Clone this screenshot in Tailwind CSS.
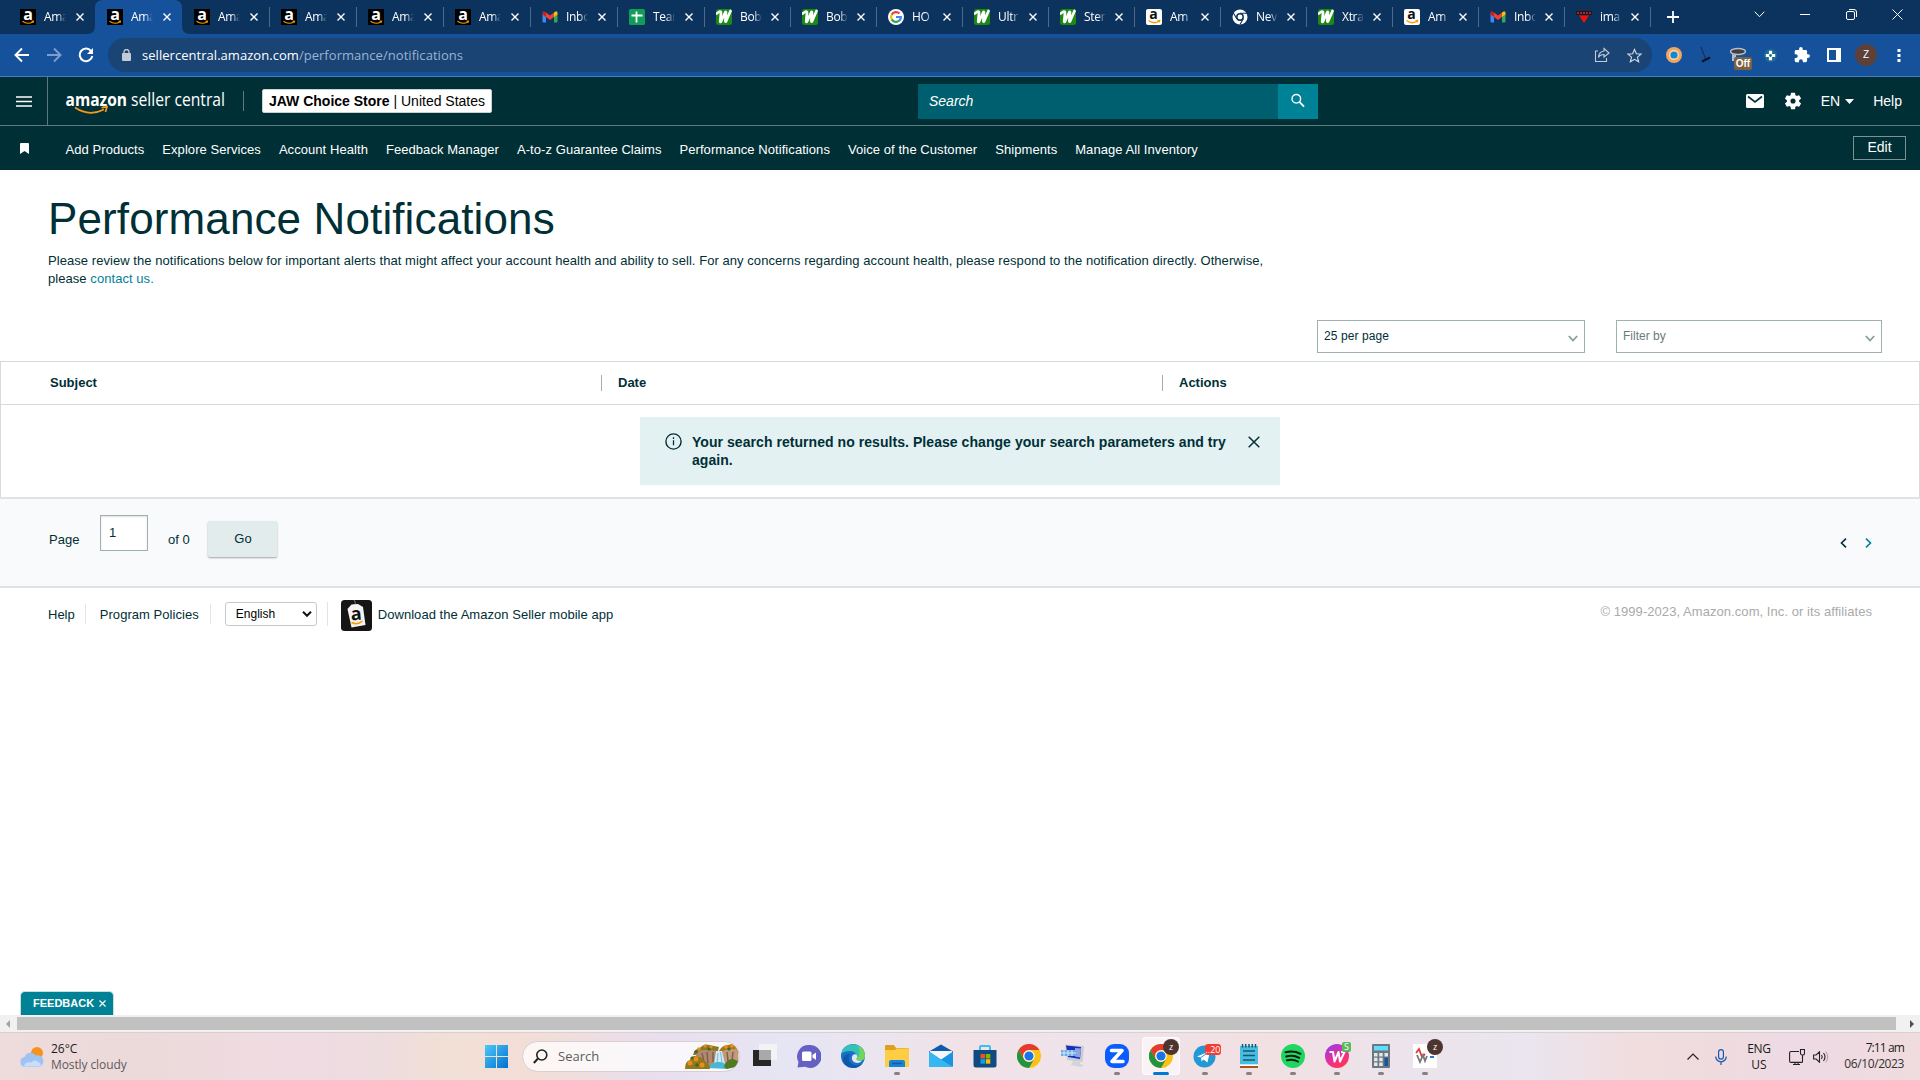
<!DOCTYPE html>
<html lang="en">
  <head>
    <meta charset="UTF-8" />
    <meta name="viewport" content="width=device-width, initial-scale=1.0" />
    <title>Performance Notifications</title>
    <script src="https://cdn.jsdelivr.net/npm/@tailwindcss/browser@4"></script>
  </head>

  <body
    class="w-[1920px] h-[1080px] overflow-hidden flex flex-col bg-white text-[#002f36] font-['Liberation_Sans',Arial,sans-serif]"
  >
    <!-- Shared icons -->
    <svg class="hidden">
      <symbol id="amazon-dark" viewBox="0 0 16 16">
        <rect width="16" height="16" fill="#000" />
        <text x="8" y="10.800" font-family="Open Sans, sans-serif" font-size="16" font-weight="700" fill="#fff" text-anchor="middle">a</text>
        <path d="M2.500 12.300q5 3.600 10.500.6M11.500 12.300l2-.2-.4 1.600" fill="none" stroke="#f90" stroke-width="1.100" />
      </symbol>
      <symbol id="amazon-light" viewBox="0 0 16 16">
        <rect width="16" height="16" rx="2" fill="#fff" />
        <text x="7.500" y="9.800" font-family="Open Sans, sans-serif" font-size="14" font-weight="700" fill="#111" text-anchor="middle">a</text>
        <path d="M2.500 11.500q5 4 10.500.8M11.500 11.600l2.200-.2-.6 2" fill="none" stroke="#f90" stroke-width="1.300" />
      </symbol>
      <symbol id="gmail" viewBox="0 0 16 16">
        <path d="M.5 4v8.500q0 1 1 1H4V7z" fill="#4285f4" />
        <path d="M15.500 4v8.500q0 1-1 1H12V7z" fill="#34a853" />
        <path d="M12 3.500l1.500-1q2-.6 2 1.500v1.500L12 8z" fill="#fbbc04" />
        <path d="M.5 5.500V4q0-2.100 2-1.500L4 3.500V8z" fill="#c5221f" />
        <path d="M4 3.500L8 6.500l4-3V8l-4 3-4-3z" fill="#ea4335" />
      </symbol>
      <symbol id="sheets" viewBox="0 0 16 16">
        <rect width="16" height="16" rx="1.500" fill="#0f9d58" />
        <path d="M7.500 2.500v11M2.500 6.500h11" stroke="#fff" stroke-width="1.800" />
      </symbol>
      <symbol id="green-w" viewBox="0 0 16 16">
        <rect width="16" height="16" rx="2.500" fill="#1c8a10" />
        <path d="M.8 4.500Q5 .8 5 4L4.200 12.500q.2 1 .8 0L9.300 3.200q.7-.8.7.3L9.300 12q.2 1.200.9 0L14.500 2" fill="none" stroke="#fff" stroke-width="2.700" stroke-linejoin="round" stroke-linecap="round" />
      </symbol>
      <symbol id="google" viewBox="0 0 16 16">
        <circle cx="8" cy="8" r="8" fill="#fff" />
        <g fill="none" stroke-width="2.200">
          <path d="M11.500 4.600A4.900 4.900 0 0 0 3.700 5.700" stroke="#ea4335" />
          <path d="M3.700 5.700a4.900 4.900 0 0 0 0 4.700" stroke="#fbbc05" />
          <path d="M3.700 10.400a4.900 4.900 0 0 0 7.500 1.300" stroke="#34a853" />
          <path d="M11.200 11.700A4.900 4.900 0 0 0 12.900 8H8" stroke="#4285f4" />
        </g>
      </symbol>
      <symbol id="chrome-white" viewBox="0 0 16 16">
        <circle cx="8" cy="8" r="7.500" fill="#fff" />
        <path d="M8 4.300h7M4.800 9.800L1.400 4M11.200 9.800L8 15.500" stroke="#0c335e" stroke-width="1.100" />
        <circle cx="8" cy="8" r="3.200" fill="#fff" stroke="#0c335e" stroke-width="1.500" />
      </symbol>
      <symbol id="triangle" viewBox="0 0 16 16">
        <path d="M0 2h16v4H0z" fill="#2a1210" />
        <path d="M1 4h14" stroke="#c0392b" stroke-width="1.500" stroke-dasharray="2 1" />
        <path d="M3 6.500h10L8 14z" fill="#f40f0f" />
      </symbol>
      <symbol id="chrome" viewBox="0 0 24 24">
        <circle cx="12" cy="12" r="12" fill="#fbc116" />
        <path d="M1.600 6A12 12 0 0 1 22.400 6H12a6 6 0 0 0-5.200 9z" fill="#e33b2e" />
        <path d="M1.600 6A12 12 0 0 0 12 24l5.200-9A6 6 0 0 1 6.800 15z" fill="#229342" />
        <circle cx="12" cy="12" r="5.700" fill="#fff" />
        <circle cx="12" cy="12" r="4.600" fill="#1a73e8" />
      </symbol>
    </svg>

    <!-- Tab strip -->
    <div class="h-[34px] bg-[#0c335e] flex items-center pl-[9px] font-['Open_Sans','Noto_Sans',sans-serif] shrink-0">
      <div id="tabs" class="flex h-full"></div>
      <svg class="w-3 h-3 ml-[16px]" viewBox="0 0 12 12"><path d="M6 0v12M0 6h12" stroke="#fff" stroke-width="1.800" /></svg>
      <div class="flex items-center ml-auto mr-[17px] -mt-[6px] gap-[35px]">
        <svg class="w-[11px] h-[7px]" viewBox="0 0 11 7"><path d="M.7.7l4.800 5 4.800-5" fill="none" stroke="#fff" /></svg>
        <svg class="w-[11px] h-[7px]" viewBox="0 0 11 7"><path d="M0 3.500h10" stroke="#fff" /></svg>
        <svg class="w-[11px] h-[11px]" viewBox="0 0 11 11"><rect x=".5" y="2.500" width="8" height="8" rx="1.500" fill="none" stroke="#fff" /><path d="M3 .5h5q2.500 0 2.500 2.500v5" fill="none" stroke="#fff" /></svg>
        <svg class="w-[11px] h-[11px]" viewBox="0 0 11 11"><path d="M.5.5l10 10M10.500.5l-10 10" stroke="#fff" /></svg>
      </div>
    </div>

    <!-- Address bar -->
    <div class="h-[43px] bg-[#15529b] border-b border-[#4b7ab8] flex items-center pl-[14px] shrink-0">
      <svg class="w-4 h-4" viewBox="0 0 16 16"><path d="M15 8H2M8 1.500L1.500 8 8 14.500" fill="none" stroke="#fff" stroke-width="1.900" /></svg>
      <svg class="w-4 h-4 ml-[16px]" viewBox="0 0 16 16"><path d="M1 8h13M8 1.500L14.500 8 8 14.500" fill="none" stroke="#7f9fca" stroke-width="1.900" /></svg>
      <svg class="w-4 h-4 ml-[16px]" viewBox="0 0 16 16"><path d="M13.300 4.300A6.300 6.300 0 1 0 14.300 9" fill="none" stroke="#fff" stroke-width="2" /><path d="M15 1v6H9z" fill="#fff" /></svg>
      <div class="w-[1544px] h-[34px] ml-[14px] rounded-full bg-[#194474] flex items-center pl-[14px] pr-[10px]">
        <svg class="w-[9px] h-3" viewBox="0 0 9 12"><rect y="4" width="9" height="8" rx="1" fill="#c2cbd6" /><path d="M2 5V3a2.500 2.500 0 0 1 5 0v2" fill="none" stroke="#c2cbd6" stroke-width="1.300" /></svg>
        <div class="ml-[11px] text-[13px] leading-none tracking-[0.04px] text-white font-['Open_Sans','Noto_Sans',sans-serif]">sellercentral.amazon.com<span class="text-[#9db3d1]">/performance/notifications</span></div>
        <svg class="w-4 h-4 ml-auto" viewBox="0 0 16 16"><path d="M4 4H1.500v10.500h11V11M10 1.500l5 4.500-5 4V7.500q-4 0-5.500 3 .5-6 5.500-6.500z" fill="none" stroke="#c2cbd6" stroke-width="1.100" /></svg>
        <svg class="w-[15px] h-[15px] ml-[17px]" viewBox="0 0 16 16"><path d="M8 1.500l2 4.600 5 .4-3.800 3.300 1.200 4.900L8 12.100l-4.400 2.600 1.200-4.900L1 6.500l5-.4z" fill="none" stroke="#d4dbe4" stroke-width="1.200" /></svg>
      </div>
      <div class="flex items-center flex-1 ml-[14px]">
        <svg class="w-4 h-4" viewBox="0 0 16 16"><circle cx="8" cy="8" r="8" fill="#f4a55f" /><circle cx="8" cy="8" r="5" fill="#fbd9b5" /><circle cx="8" cy="8" r="3.600" fill="#1388d6" /></svg>
        <svg class="w-4 h-4 ml-[16px]" viewBox="0 0 16 16"><path d="M3 0l5 13" stroke="#17284a" /><path d="M4 14.500l8-4" stroke="#0b1220" stroke-width="2" /></svg>
        <div class="relative ml-[16px] w-4 h-4">
          <svg class="w-4 h-4" viewBox="0 0 16 16"><ellipse cx="8" cy="4.500" rx="7.500" ry="3" fill="#3c4043" stroke="#b9bdc2" stroke-width="1.500" /><path d="M2 7v7h4V8z" fill="#b9bdc2" /></svg>
          <span class="absolute left-[4px] top-[10px] w-[18px] h-[13px] rounded-[2px] bg-[#7a6144] text-white text-[10px] font-bold leading-[13px] text-center">Off</span>
        </div>
        <svg class="w-[15px] h-[15px] ml-[17px]" viewBox="0 0 16 16"><circle cx="8" cy="8" r="7" fill="#1d6a96" /><path d="M6.300 3h3.400v3.300H13v3.400H9.700V13H6.300V9.700H3V6.300h3.300z" fill="#fff" /><circle cx="8" cy="8" r="1.500" fill="#1d6a96" /></svg>
        <svg class="w-4 h-4 ml-[16px]" viewBox="1 1 22 22"><path fill="#fff" d="M20.500 11H19V7a2 2 0 0 0-2-2h-4V3.500a2.500 2.500 0 0 0-5 0V5H4a2 2 0 0 0-2 2v3.800h1.500a2.700 2.700 0 0 1 0 5.400H2V20a2 2 0 0 0 2 2h3.800v-1.500a2.700 2.700 0 0 1 5.400 0V22H17a2 2 0 0 0 2-2v-4h1.500a2.500 2.500 0 0 0 0-5z" /></svg>
        <svg class="w-[14px] h-[14px] ml-[17px]" viewBox="0 0 14 14"><path d="M1 1h12v12H1z" fill="none" stroke="#fff" stroke-width="2" /><path d="M9 1h4v12H9z" fill="#fff" /></svg>
        <span class="ml-[14px] w-[22px] h-[22px] rounded-full bg-[#5d4037] text-white text-[10px] leading-[22px] text-center">Z</span>
        <svg class="w-1 h-4 ml-[20px]" viewBox="0 0 4 16"><path d="M.5 2h3v3h-3zM.5 7h3v3h-3zM.5 12h3v3h-3z" fill="#fff" /></svg>
      </div>
    </div>

    <!-- Seller Central header -->
    <header class="h-[49px] bg-[#002f36] border-b border-[#5f7a7c] flex items-center text-white text-sm leading-none shrink-0">
      <div class="w-12 h-full border-r border-[#5f7a7c] flex items-center pl-4">
        <svg class="w-4 h-[11px]" viewBox="0 0 16 11"><path d="M0 1h16M0 5.500h16M0 10h16" stroke="#fff" stroke-width="1.600" /></svg>
      </div>
      <svg class="w-[164px] h-8 ml-[16px]" viewBox="0 0 164 32" font-family="Open Sans, sans-serif" fill="#fff">
        <text x="1.500" y="20.500" font-size="18.500" font-weight="700" textLength="61.500" lengthAdjust="spacingAndGlyphs">amazon</text>
        <text x="67" y="20.500" font-size="18.500" textLength="94" lengthAdjust="spacingAndGlyphs">seller central</text>
        <path d="M11 22.500q14 9.500 29 2M37.500 22.700l5.500-.8-1.500 5" fill="none" stroke="#f7981d" stroke-width="1.700" />
      </svg>
      <div class="w-px h-5 bg-[#5f7a7c] ml-[15px]"></div>
      <div class="ml-[18px] w-[230px] h-6 rounded-[2px] border border-[#c8d0d0] bg-white text-black leading-[23px] text-center whitespace-nowrap"><b>JAW Choice Store</b> | United States</div>
      <div class="ml-[426px] w-[360px] h-[35px] bg-[#005f6e] rounded-l-[1px] pl-[11px] leading-[35px] italic">Search</div>
      <div class="w-[40px] h-[35px] bg-[#008296] flex items-center justify-center">
        <svg class="w-[14px] h-[15px] mr-px mb-px" viewBox="0 0 15 15"><circle cx="5.700" cy="5.700" r="4.600" fill="none" stroke="#fff" stroke-width="1.500" /><path d="M9 9l5 5" stroke="#fff" stroke-width="2" /></svg>
      </div>
      <div class="flex items-center ml-auto mr-[18px]">
        <svg class="w-[18px] h-[14px]" viewBox="0 0 18 14"><rect width="18" height="14" rx="1.500" fill="#fff" /><path d="M2 2.500l7 5.500 7-5.500" fill="none" stroke="#002f36" stroke-width="1.600" /></svg>
        <svg class="w-[18px] h-[18px] ml-[20px]" viewBox="1.500 1.500 21 21"><path fill="#fff" d="M19.140 12.940c.04-.3.060-.61.060-.94s-.02-.64-.07-.94l2.030-1.580a.49.49 0 0 0 .12-.61l-1.920-3.320a.49.49 0 0 0-.59-.22l-2.390.96a7 7 0 0 0-1.620-.94l-.36-2.540a.48.48 0 0 0-.48-.41h-3.840a.48.48 0 0 0-.47.41l-.36 2.540a7 7 0 0 0-1.620.94l-2.390-.96a.48.48 0 0 0-.59.22L2.740 8.870a.48.48 0 0 0 .12.61l2.030 1.580a7 7 0 0 0 0 1.880l-2.030 1.580a.49.49 0 0 0-.12.61l1.920 3.320c.12.220.37.290.59.220l2.390-.96c.5.380 1.030.7 1.620.94l.36 2.540c.05.240.24.410.48.410h3.840c.24 0 .44-.17.47-.41l.36-2.540a7 7 0 0 0 1.620-.94l2.390.96c.22.080.47 0 .59-.22l1.920-3.320a.48.48 0 0 0-.12-.61zM12 15a3 3 0 1 1 0-6 3 3 0 0 1 0 6z" /></svg>
        <span class="ml-[19px]">EN</span>
        <svg class="w-[9px] h-[5px] ml-[5px]" viewBox="0 0 9 5"><path d="M0 0h9L4.500 5z" fill="#fff" /></svg>
        <span class="ml-[19px]">Help</span>
      </div>
    </header>

    <!-- Favorites bar -->
    <nav class="h-[44px] bg-[#002f36] flex items-center text-white text-[13px] leading-none shrink-0">
      <svg class="w-[9px] h-[11px] ml-[20px] mr-[36.500px]" viewBox="0 0 9 11"><path d="M0 1q0-1 1-1h7q1 0 1 1v10L4.500 8 0 11z" fill="#fff" /></svg>
      <div id="favorites" class="flex gap-[18px] tracking-[0.064px] mt-[2px]"></div>
      <div class="ml-auto mr-[14px] w-[53px] h-6 border border-[#7b9193] text-sm leading-[21px] text-center">Edit</div>
    </nav>

    <!-- Page content -->
    <main class="flex-1 flex flex-col relative">
      <div class="h-[191px] pl-12">
        <h1 class="pt-[24px] text-[44px] leading-[50px] tracking-[0.12px] whitespace-nowrap">Performance Notifications</h1>
        <p class="mt-[8px] w-[1240px] text-[13px] leading-[18px] tracking-[0.058px]">
          Please review the notifications below for important alerts that might affect your account health and ability to sell. For any concerns regarding account health, please respond to the notification directly. Otherwise,<br />please <a class="text-[#008296]">contact us.</a>
        </p>
        <div class="flex gap-[31px] ml-[1269px] mt-[32px] text-xs leading-none">
          <div class="w-[268px] h-[33px] border border-[#9fb0b0] flex items-center justify-between pl-[6px] pr-[6px] shrink-0">
            <span class="-mt-px tracking-[0.08px]">25 per page</span>
            <svg class="w-[10px] h-[7px] mt-[3px]" viewBox="0 0 10 7"><path d="M.8 1L5 5.500 9.200 1" fill="none" stroke="#8b9c9d" stroke-width="1.800" /></svg>
          </div>
          <div class="w-[266px] h-[33px] border border-[#9fb0b0] flex items-center justify-between pl-[6px] pr-[6px] shrink-0">
            <span class="-mt-px text-[#6b7b7c]">Filter by</span>
            <svg class="w-[10px] h-[7px] mt-[3px]" viewBox="0 0 10 7"><path d="M.8 1L5 5.500 9.200 1" fill="none" stroke="#8b9c9d" stroke-width="1.800" /></svg>
          </div>
        </div>
      </div>

      <section class="h-[136px] border border-b-0 border-[#d5dbdb]">
        <div class="h-[43px] border-b border-[#d5dbdb] flex items-center text-[13px] font-bold leading-none">
          <span class="w-[551px] ml-[49px] pb-px">Subject</span>
          <span class="w-[561px] h-4 border-l border-[#9fb0b0] pl-[16px] leading-4">Date</span>
          <span class="h-4 border-l border-[#9fb0b0] pl-[16px] leading-4">Actions</span>
        </div>
        <div class="w-[640px] h-[68px] mt-3 mx-auto bg-[#e3f1f2] flex">
          <svg class="w-[17px] h-[17px] ml-[25px] mt-[16px]" viewBox="0 0 17 17"><circle cx="8.500" cy="8.500" r="7.600" fill="none" stroke="#002f36" stroke-width="1.400" /><path d="M8.500 7.300v5M8.500 4.300v1.600" stroke="#002f36" stroke-width="1.300" /></svg>
          <p class="ml-[10px] mt-[16px] w-[540px] text-sm leading-[18px] font-bold tracking-[0.055px]">Your search returned no results. Please change your search parameters and try again.</p>
          <svg class="w-3 h-3 ml-[16px] mt-[19px]" viewBox="0 0 12 12"><path d="M.7.7l10.600 10.600M11.300.7L.7 11.300" stroke="#002f36" stroke-width="1.500" /></svg>
        </div>
      </section>

      <section class="h-[91px] bg-[#f9fafb] border-y-2 border-[#dfe3e6] flex text-[13px] leading-none pl-[49px]">
        <span class="mt-[34px] w-[51px]">Page</span>
        <span class="mt-[16px] w-12 h-[36px] border border-[#9fb0b0] bg-white shadow-[inset_0_1px_2px_rgba(0,0,0,0.12)] pl-[8px] pt-[10px]">1</span>
        <span class="mt-[34px] ml-[20px] w-[40px]">of 0</span>
        <span class="mt-[22px] w-[69px] h-[36px] rounded-[2px] bg-[#e3eced] shadow-[0_1px_2px_rgba(0,0,0,0.35)] text-center leading-[35px] pl-px">Go</span>
        <svg class="w-[7px] h-[10px] ml-auto mt-[39px]" viewBox="0 0 7 10"><path d="M6 .7L1.500 5 6 9.300" fill="none" stroke="#002f36" stroke-width="1.600" /></svg>
        <svg class="w-[7px] h-[10px] ml-[18px] mr-[48px] mt-[39px]" viewBox="0 0 7 10"><path d="M1 .7L5.500 5 1 9.300" fill="none" stroke="#008296" stroke-width="1.600" /></svg>
      </section>

      <footer class="h-[52px] flex items-center pl-12 pr-12 text-[13px] leading-none">
        <span>Help</span>
        <span class="w-px h-5 bg-[#e1e5e5] ml-[10px] mr-[14px]"></span>
        <span class="tracking-[0.05px]">Program Policies</span>
        <span class="w-px h-5 bg-[#e1e5e5] ml-[11px] mr-[14px]"></span>
        <span class="w-[92px] h-6 border border-[#c4c9c9] rounded-[3px] flex items-center justify-between pl-[10px] pr-[4px] text-xs text-black">
          English
          <svg class="w-[10px] h-[6px]" viewBox="0 0 10 6"><path d="M1 .8l4 4 4-4" fill="none" stroke="#111" stroke-width="2" /></svg>
        </span>
        <span class="w-px h-6 bg-[#e1e5e5] ml-[10px] mr-[13px]"></span>
        <svg class="w-[31px] h-[31px] mt-[3px]" viewBox="0 0 31 31">
          <rect width="31" height="31" rx="3.500" fill="#151515" />
          <path d="M13 0q3 3 0 6" fill="none" stroke="#777" />
          <path d="M6.500 9l4-4.500 6.500-.5 5 3 2.500 18-14 2.500z" fill="#f4f4f2" />
          <text x="15.500" y="20" font-family="Open Sans, sans-serif" font-size="18" font-weight="700" fill="#111" text-anchor="middle" transform="rotate(-5 15 17)">a</text>
          <path d="M10.500 22.500q6 3 11-1.500" fill="none" stroke="#f90" stroke-width="1.500" />
        </svg>
        <span class="ml-[6px] tracking-[0.035px]">Download the Amazon Seller mobile app</span>
        <span class="ml-auto -mt-[6px] text-[#aaaaaa] tracking-[0.06px]">© 1999-2023, Amazon.com, Inc. or its affiliates</span>
      </footer>

      <!-- Feedback tab, pinned to the bottom of the page -->
      <div class="absolute left-[20px] bottom-0 w-[94px] h-[24px] rounded-t-[5px] border border-b-0 border-[#c9dfe2] bg-[#008296] text-white text-[11px] font-bold flex items-center pl-[12px]">
        FEEDBACK
        <svg class="w-[7px] h-[7px] ml-[5px]" viewBox="0 0 7 7"><path d="M.5.5l6 6M6.500.5l-6 6" stroke="#fff" stroke-width="1.200" /></svg>
      </div>
    </main>

    <!-- Horizontal scrollbar -->
    <div class="h-[17px] bg-[#f1f1f1] flex items-center justify-between px-[6px] shrink-0">
      <svg class="w-[4px] h-[8px]" viewBox="0 0 4 8"><path d="M4 0v8L0 4z" fill="#a3a3a3" /></svg>
      <div class="w-[1879px] h-[13px] bg-[#c1c1c1] ml-[7px] mr-auto"></div>
      <svg class="w-[4px] h-[8px]" viewBox="0 0 4 8"><path d="M0 0v8l4-4z" fill="#505050" /></svg>
    </div>

    <!-- Taskbar -->
    <div
      class="h-12 border-t border-[#dccfd4] bg-[linear-gradient(90deg,#eedcdc_0px,#ecdadb_150px,#f0dbe2_290px,#eddce0_370px,#f2dfd5_450px,#f2ded8_550px,#e9deed_650px,#e6e5f4_780px,#ebe5ef_880px,#f1e2e7_960px,#efe3eb_1100px,#f2e0e2_1260px,#ece4ec_1400px,#eae5ee_1530px,#f1dcde_1640px,#efdbdf_1730px,#eddae4_1790px,#f0dbde_1920px)] flex items-center text-xs leading-4 text-[#1b1b1b] font-['Open_Sans','Noto_Sans',sans-serif] shrink-0"
    >
      <svg class="w-6 h-5 ml-[20px]" viewBox="0 0 24 20">
        <circle cx="17" cy="6" r="6" fill="#f6921e" />
        <path d="M5 20a5 5 0 0 1-.5-9.900A6.500 6.500 0 0 1 16 8.500a5.800 5.800 0 0 1 3 11.500z" fill="#9fc3f3" />
        <path d="M4 19.500q1-5 7-4 4-4 8 0 3 1.500 1 4z" fill="#c9defa" />
      </svg>
      <div class="ml-[7px] w-[434px]">
        <div>26°C</div>
        <div class="text-[#5f5a5b] tracking-[-0.1px]">Mostly cloudy</div>
      </div>
      <svg class="w-[23px] h-[23px] mb-px" viewBox="0 0 23 23">
        <defs><linearGradient id="win" x1="0" y1="0" x2="1" y2="1"><stop stop-color="#4cc8f8" /><stop offset="1" stop-color="#0270cf" /></linearGradient></defs>
        <path d="M0 0h11v11H0zM12 0h11v11H12zM0 12h11v11H0zM12 12h11v11H12z" fill="url(#win)" />
      </svg>
      <div class="w-[218px] h-[31px] ml-[14px] mb-px rounded-full bg-white/75 border border-[#d9cdd6] flex items-center pl-[10px] overflow-hidden shrink-0">
        <svg class="w-[15px] h-[15px]" viewBox="0 0 15 15"><circle cx="8.800" cy="6" r="5" fill="none" stroke="#222" stroke-width="1.600" /><path d="M5 9.500L.8 14" stroke="#222" stroke-width="2" /></svg>
        <span class="ml-[10px] mb-px text-[13px] text-[#5c5c5c]">Search</span>
        <svg class="w-[54px] h-[26px] ml-auto mr-0" viewBox="0 0 54 26">
          <path d="M8 12q1-6 7-7 4-5 9-3l10 2-2 8H10z" fill="#8a7a1f" />
          <path d="M34 8q3-6 9-6 8-3 10 2l1 6-16 4z" fill="#a07a1c" />
          <path d="M10 10q8-4 12-3l11 1-1 17H15z" fill="#b08a70" />
          <path d="M36 9q8-5 17-2l1 16-14 1z" fill="#bf9a7c" />
          <path d="M17 10l2 9M22 9l1 11M28 9v10M42 9l1 9M48 9l-1 9" stroke="#80604c" stroke-width="1.500" />
          <path d="M31 8h6l3 13H29z" fill="#cfeaf5" />
          <path d="M33 10l-1 10M35.500 9l1.500 11" stroke="#77bcd8" />
          <path d="M23 25q4-7 12-6 7 1 8 7z" fill="#49b6d6" />
          <path d="M0 26q0-8 5-9 2-6 8-3 5 0 6 4 6 2 6 8z" fill="#8c7a1c" />
          <path d="M39 24q2-8 9-8l5 2-2 6-9 2z" fill="#4f7a22" />
          <g fill="#f08a1c">
            <circle cx="5" cy="20" r="2.500" /><circle cx="11" cy="16" r="2.500" /><circle cx="17" cy="22" r="2.500" /><circle cx="14" cy="6" r="1.800" /><circle cx="20" cy="3" r="1.600" /><circle cx="26" cy="4" r="1.600" /><circle cx="41" cy="4" r="1.800" /><circle cx="47" cy="3" r="1.800" /><circle cx="52" cy="6" r="1.800" />
          </g>
          <g fill="#3f6a20">
            <circle cx="11" cy="9" r="1.800" /><circle cx="24" cy="6" r="1.600" /><circle cx="7" cy="15" r="1.600" /><circle cx="44" cy="6" r="1.600" /><circle cx="12" cy="22" r="1.800" />
          </g>
        </svg>
      </div>
      <div id="taskbar" class="flex h-full ml-[3px] items-center"></div>

      <div class="ml-auto mr-[16px] flex items-center">
        <svg class="w-3 h-[7px]" viewBox="0 0 12 7"><path d="M.5 6.500L6 1l5.500 5.500" fill="none" stroke="#222" stroke-width="1.200" /></svg>
        <svg class="w-3 h-4 ml-[16px]" viewBox="0 0 12 16"><rect x="3.600" y=".6" width="4.800" height="9.500" rx="2.400" fill="none" stroke="#1a56b0" stroke-width="1.200" /><path d="M.7 7.500a5.300 5.300 0 0 0 10.600 0M6 12.800V16" fill="none" stroke="#1a56b0" stroke-width="1.200" /></svg>
        <div class="ml-[20px] w-[24px] flex flex-col items-center"><span class="tracking-[-0.3px]">ENG</span><span>US</span></div>
        <svg class="w-4 h-4 ml-[18px]" viewBox="0 0 16 16"><path d="M10 2.500H2Q.6 2.500.6 4v8q0 1.400 1.400 1.400h10.500q1 0 1-1V8M4 15.500h7M6 13.500v2M9 13.500v2" fill="none" stroke="#222" stroke-width="1.100" /><path d="M11.500.5h4v4q0 1.500-2 1.500t-2-1.500zM13.500 6v3" fill="none" stroke="#222" stroke-width="1.100" /></svg>
        <svg class="w-4 h-3 ml-[8px]" viewBox="0 0 16 12"><path d="M.6 4h2.500L6.500.8v10.400L3.100 8H.6z" fill="none" stroke="#222" stroke-width="1.100" /><path d="M8.500 4q1.500 2 0 4M10.500 2q3 4 0 8" fill="none" stroke="#222" stroke-width="1.100" /><path d="M12.700.5q4 5.500 0 11" fill="none" stroke="#b5a9ad" stroke-width="1.100" /></svg>
        <div class="ml-[15px] w-[60px] flex flex-col items-end whitespace-nowrap -mt-px"><div class="tracking-[-0.9px] word-spacing-2">7:11 am</div><div class="tracking-[-0.4px] text-[#333]">06/10/2023</div></div>
      </div>
    </div>

    <script>
      const tabs = [
        ["amazon-dark", "Ama"],
        ["amazon-dark", "Ama"],
        ["amazon-dark", "Ama"],
        ["amazon-dark", "Ama"],
        ["amazon-dark", "Ama"],
        ["amazon-dark", "Ama"],
        ["gmail", "Inbo"],
        ["sheets", "Tear"],
        ["green-w", "Bob"],
        ["green-w", "Bob"],
        ["google", "HO"],
        ["green-w", "Ultr"],
        ["green-w", "Ster"],
        ["amazon-light", "Am"],
        ["chrome-white", "Nev"],
        ["green-w", "Xtra"],
        ["amazon-light", "Am"],
        ["gmail", "Inbo"],
        ["triangle", "ima"],
      ];
      const ACTIVE = 1;

      document.getElementById("tabs").innerHTML = tabs
        .map(([icon, label], i) => {
          const width = i < 8 ? "w-[87px]" : "w-[86px]";
          const gap = i < 8 ? "ml-[10px]" : "ml-[9px]";
          const line = i < 2 ? "bg-transparent" : "bg-[#4c6a8c]";
          // the active tab flares out at its bottom corners
          const shape =
            i === ACTIVE
              ? `<svg class="absolute -left-[9px] top-0 w-[103px] h-[34px]" viewBox="0 0 103 34"><path d="M0 34q8 0 8-8V8q0-8 8-8h71q8 0 8 8v18q0 8 8 8z" fill="#15529b"/></svg>`
              : "";
          return `
            <div class="relative ${width} h-full flex items-center pl-[11px]">
              ${shape}
              <svg class="relative w-4 h-4 shrink-0"><use href="#${icon}"/></svg>
              <span class="relative ml-[8px] w-[22px] overflow-hidden whitespace-nowrap text-[12px] tracking-[-0.3px] text-white mask-r-from-60%">${label}</span>
              <svg class="relative w-[8px] h-[8px] ${gap}" viewBox="0 0 8 8"><path d="M.5.5l7 7M7.500.5l-7 7" stroke="#fff" stroke-width="1.400"/></svg>
              <span class="ml-auto w-px h-5 ${line}"></span>
            </div>`;
        })
        .join("");

      const favorites = [
        "Add Products",
        "Explore Services",
        "Account Health",
        "Feedback Manager",
        "A-to-z Guarantee Claims",
        "Performance Notifications",
        "Voice of the Customer",
        "Shipments",
        "Manage All Inventory",
      ];
      document.getElementById("favorites").innerHTML = favorites
        .map((name) => `<a>${name}</a>`)
        .join("");

      const badge = `<span class="absolute left-[24px] top-[6px] w-4 h-4 rounded-full bg-[#4e342e] text-white text-[9px] leading-4 text-center">z</span>`;

      // each app: icon markup (24x24), running state, optional badge
      const apps = [
        { svg: `<path d="M6 0h18v16H6z" fill="#f3f3f3"/><path d="M0 6h18v16H0z" fill="#262626"/><path d="M6 6h12v10H6z" fill="#a9a9a9"/>` },
        { svg: `<path d="M12 1a11.500 11.500 0 1 1-4 21.800L.5 23.500 1.500 18A11.500 11.500 0 0 1 12 1z" fill="#6460c4"/><rect x="5" y="7.500" width="9.500" height="9.500" rx="1.500" fill="#fff"/><path d="M15.500 11l3.500-2.500v7.500l-3.500-2.500z" fill="#fff"/>` },
        { svg: `<circle cx="12" cy="12" r="12" fill="#1572c8"/><path d="M.3 9.500A12 12 0 0 1 24 12q-.3 4.500-5 4.500-4.500 0-4-2.500 1.500-2 0-4-2-3-6-3Q3 7 .3 9.500z" fill="#35c1b8"/><path d="M17 1.500A12 12 0 0 1 24 12q-.3 4.500-5 4.500-3 0-4-1.500 6-3 2-13.500z" fill="#6fd858"/><path d="M9 10q-3.500 7 3 10.500 4.500 2 9.500-1A12 12 0 0 1 12 24Q2 23 2 15q1-5 7-5z" fill="#1258a8"/><path d="M15.500 10.500q1.500 3-.5 4.500 1 2.500 6.500 1.500-3 3.500-7.500 2-4-2-3-6 1-3 4.500-2z" fill="#e9e6f2"/>` },
        { run: true, svg: `<path d="M0 2q0-1 1-1h8l2 3h12q1 0 1 1v17H0z" fill="#e1a01c"/><path d="M0 6h10l1.500-1.500H24V22q0 1-1 1H1q-1 0-1-1z" fill="#fdcd45"/><path d="M4 18q0-2 2-2h12q2 0 2 2v5H4z" fill="#1683d8"/><path d="M7 19.500h10" stroke="#0b5cab" stroke-width="1.500"/>` },
        { svg: `<path d="M0 7.500L12 .5l12 7V10H0z" fill="#0f5cab"/><path d="M1 7h22v9H1z" fill="#f3f6fa"/><path d="M0 7.500l12 8 12-8V22q0 1-1 1H1q-1 0-1-1z" fill="#1b93e0"/><path d="M0 7.500l12 8L24 23H1q-1 0-1-1z" fill="#35b8f1"/><path d="M1 7h22l-11 8z" fill="#f3f6fa"/>` },
        { svg: `<path d="M7 6V3q0-1 1-1h8q1 0 1 1v3" fill="none" stroke="#37c2f5" stroke-width="2"/><path d="M.5 6h23v15q0 2.500-2.500 2.500H3Q.5 23.500.5 21z" fill="#114a80"/><path d="M7.500 10H12v4.500H7.500z" fill="#f25022"/><path d="M12.800 10h4.500v4.500h-4.500z" fill="#7fba00"/><path d="M7.500 15.200H12v4.500H7.500z" fill="#00a4ef"/><path d="M12.800 15.200h4.500v4.500h-4.500z" fill="#ffb900"/>` },
        { svg: `<use href="#chrome"/>` },
        { svg: `<path d="M4 .5l19 1.500-1.500 16L6 16z" fill="#c9ccd4"/><path d="M5 1.500l15 1.500-1 12L7 13z" fill="#1930b8"/><path d="M14 4l6 .5-1 9-5-1z" fill="#8fa4e4"/><path d="M0 6h15v6H0z" fill="#6ea9e6"/><path d="M0 9h15M3 6v6M7 6v6M11 6v6" stroke="#d8e9fb"/><path d="M12 17l7 1v2l4 1-3 2-10-2z" fill="#d2d4d9"/>` },
        { run: true, svg: `<rect width="24" height="24" rx="9" fill="#0b5cff"/><path d="M6.500 6.500h10.500L7 17.500h11" fill="none" stroke="#fff" stroke-width="3.600" stroke-linejoin="round" stroke-linecap="round"/>` },
        { active: true, svg: `<use href="#chrome"/>`, extra: badge },
        { run: true, svg: `<circle cx="11.500" cy="12.500" r="11" fill="#2199d4"/><path d="M4 12.500L17 7l-2.500 11.500-4-3-2 2-.5-4z" fill="#fff"/><path d="M8 13.500l7-5" stroke="#2199d4"/>`,
          extra: `<span class="absolute left-[22px] top-[11px] w-4 h-[11px] rounded-[3px] bg-[#f23c34] text-white text-[9px] leading-[11px] text-center">..20</span>` },
        { run: true, svg: `<path d="M3 2h18v18.500H3z" fill="#49bcdf"/><path d="M3 20.500h18v1.500H3z" fill="#fff"/><path d="M3 22h18v2H3z" fill="#a5561b"/><path d="M5.500 0v3.500M8.700 0v3.500M12 0v3.500M15.300 0v3.500M18.500 0v3.500M6 7h12M6 11.500h12M6 16h12" stroke="#0e5873" stroke-width="1.500"/>` },
        { run: true, svg: `<circle cx="12" cy="12" r="12" fill="#1ed760"/><path d="M4.500 8.300q8-2.300 15 1.500M5.200 12.500q7-2 13 1.300M6 16.300q6-1.600 11 1.200" fill="none" stroke="#0b1a10" stroke-width="2" stroke-linecap="round"/>` },
        { run: true, svg: `<defs><linearGradient id="wps" x1="0" y1="0" x2=".6" y2="1"><stop stop-color="#8a3cf5"/><stop offset=".6" stop-color="#e8309b"/><stop offset="1" stop-color="#ff3555"/></linearGradient></defs><circle cx="12" cy="12" r="12" fill="url(#wps)"/><path d="M4.500 8h3.500l1.500 9.500L13.500 8l1.500 9.500L19.500 8H16" fill="none" stroke="#fff" stroke-width="2" stroke-linejoin="round"/>`,
          extra: `<span class="absolute left-[27px] top-[9px] w-[9px] h-[10px] rounded-[2px] bg-[#5bb85d] text-white text-[9px] leading-[10px] text-center">S</span>` },
        { run: true, svg: `<rect x="3" width="18" height="24" rx="1" fill="#6d7780"/><path d="M5 2h14v4.500H5z" fill="#5fdcfb"/><path d="M5 9h3.500v3.500H5zM10.200 9h3.500v3.500h-3.500zM15.500 9H19v3.500h-3.500zM5 13.700h3.500v3.500H5zM10.200 13.700h3.500v3.500h-3.500zM5 18.500h3.500V22H5zM10.200 18.500h3.500V22h-3.500z" fill="#e3e7ea"/><path d="M15.500 13.700H19V22h-3.500z" fill="#1256a0"/>` },
        { run: true, svg: `<path d="M0 0h24v24H0z" fill="#fff"/><path d="M3 9l3-4 3 8 3-3" fill="none" stroke="#e03a34" stroke-width="1.800"/><path d="M4 11l3 7 3-7 2 6 2-5" fill="none" stroke="#777" stroke-width="1.800"/><path d="M17 13h4" stroke="#2e6fd0" stroke-width="2"/>`, extra: badge },
      ];

      document.getElementById("taskbar").innerHTML = apps
        .map((app) => {
          const bg = app.active
            ? `<span class="absolute left-[3px] top-[4px] w-[38px] h-[38px] rounded-[4px] bg-white/60 border border-white/70"></span>`
            : "";
          const mark = app.active
            ? `<span class="absolute left-[14px] top-[39px] w-4 h-[3px] rounded-full bg-[#0078d4]"></span>`
            : app.run
              ? `<span class="absolute left-[19px] top-[39px] w-[6px] h-[3px] rounded-full bg-[#86807f]"></span>`
              : "";
          return `
            <div class="relative w-11 h-full">
              ${bg}
              <svg class="relative w-6 h-6 mt-[11px] ml-[10px]" viewBox="0 0 24 24">${app.svg}</svg>
              ${mark}${app.extra || ""}
            </div>`;
        })
        .join("");
    </script>
  </body>
</html>
